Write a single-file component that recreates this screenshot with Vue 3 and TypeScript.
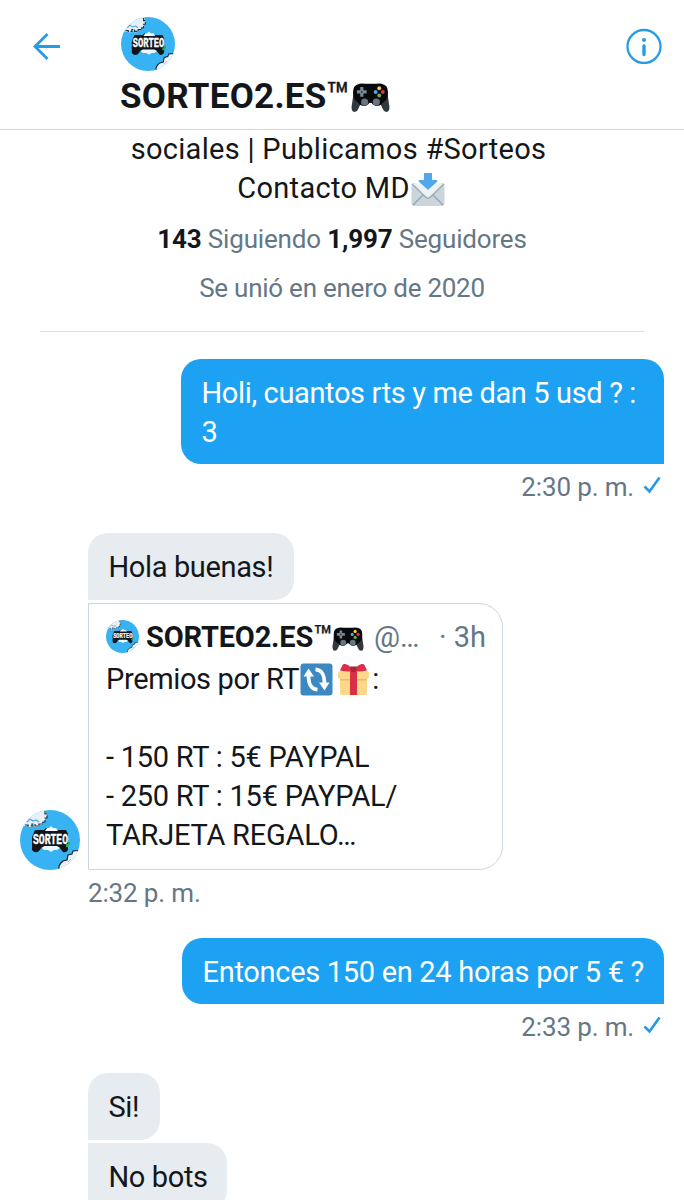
<script setup lang="ts">
interface Line {
  text: string
  cls: string
}

const question: Line[] = [
  { text: 'Holi, cuantos rts y me dan 5 usd ? :', cls: 'q1' },
  { text: '3', cls: 'q2' },
]

const prizes: Line[] = [
  { text: '- 150 RT : 5€ PAYPAL', cls: 'p1' },
  { text: '- 250 RT : 15€ PAYPAL/', cls: 'p2' },
  { text: 'TARJETA REGALO…', cls: 'p3' },
]
</script>

<template>
  <svg class="defs" width="60" height="60" aria-hidden="true">
    <symbol id="avatar" viewBox="0 0 60 60">
      <clipPath id="disc"><circle cx="30" cy="30" r="30" /></clipPath>
      <g clip-path="url(#disc)">
        <rect width="60" height="60" fill="#37b3f3" />
        <path d="M0 0H26V4H27V8H25V12H22V15H18V17H14V15H12V17H8V16H4V15H0Z" fill="#e9f0f5" />
        <path d="M25 1V4H27V8H25V12H23V14H19V16H15V14H12V16H8V15H5" fill="none" stroke="#1c3446" stroke-width="1.2" stroke-dasharray="5 1.5" />
        <path d="M7 12L10 9L13 11L16 10L19 12" fill="none" stroke="#48a9e0" stroke-width="1.2" />
        <path d="M39 60V56L41 53L43 51L47 50L48 45L52 44L53 41L60 40V60Z" fill="#edf4f8" />
        <path d="M39 59V56L41 53L43 51L47 50L48 45L52 44L53 41L58 40.500" fill="none" stroke="#12222b" stroke-width="1.2" />
        <path d="M48 52L51 49" stroke="#89c8a1" stroke-width="1" />
        <path d="M15 20H24L26 18H34L36 20H46L48 24V39Q47 43 43 42L39 37H22L19 41Q15 44 12 40V27Z" fill="#11161a" />
        <path d="M22 38L24 36H37L40 38L37 40L34 40L31 42L28 40H24Z" fill="#e9f8ff" />
        <path d="M25 21L27 18H29L31 16L33 18H36L38 21Z" fill="#f5fbff" />
        <path d="M46 34H48V32H50V35H48V37H46Z" fill="#28ae43" />
      </g>
      <text x="13" y="33.500" textLength="35" lengthAdjust="spacingAndGlyphs" class="logo-word">SORTEO</text>
    </symbol>
    <symbol id="gamepad" viewBox="0 0 38 28">
      <path d="M3 6L1 20Q-.5 27 3 28Q6 28.500 8 23L10 19H28L30 23Q32 28.500 35 28Q38.500 27 37 20L35 6Z" fill="#303940" />
      <path d="M7 1Q9-.3 14 .7H24Q29-.3 31 1Q36 2 36 9Q36 17 31 19Q28 23 23.500 22Q21 21 20 19H18Q17 21 14.500 22Q10 23 7 19Q2 17 2 9Q2 2 7 1Z" fill="#08090b" />
      <path d="M9 3.800h3.100v3.200h3.200v3.100h-3.200v3.200H9v-3.200H5.800V7H9z" fill="#788b95" />
      <circle cx="10.550" cy="8.550" r="1" fill="#33414a" />
      <circle cx="13.300" cy="18.500" r="3.500" fill="#667580" />
      <circle cx="24.700" cy="18.500" r="3.500" fill="#667580" />
      <circle cx="27.500" cy="5" r="1.900" fill="#ffca3a" />
      <circle cx="24" cy="8.600" r="1.900" fill="#49a9e9" />
      <circle cx="31" cy="8.600" r="1.900" fill="#df3349" />
      <circle cx="27.500" cy="12.100" r="1.900" fill="#72ad4c" />
    </symbol>
    <symbol id="envelope" viewBox="0 0 34 34">
      <rect x=".5" y="10" width="33" height="23" rx="3" fill="#cbd5dc" />
      <path d="M2 32L13 21M32 32L21 21" stroke="#98a9b5" stroke-width="1.500" />
      <path d="M1 11L14.500 24Q17 26.300 19.500 24L33 11" fill="#e5eaee" stroke="#98a9b5" stroke-width="1.200" />
      <path d="M3 10H31L20 21.500Q17 24 14 21.500Z" fill="#f0f3f5" />
      <path d="M13 0H21V7H26Q27 7.500 26 8.800L18 16Q17 17 16 16L8 8.800Q7 7.500 8 7H13Z" fill="#50a7e9" />
    </symbol>
    <symbol id="repeat" viewBox="0 0 33 33">
      <rect x=".5" y=".5" width="32" height="32" rx="3" fill="#3b88c3" />
      <path d="M17.500 26.700C10.500 26 8.500 21 8.500 12M15.500 6.300C22.500 7 24.500 12 24.500 21" fill="none" stroke="#fff" stroke-width="3.800" />
      <path d="M3.500 13.500L8.500 5.500L14 13.500ZM29.500 19.500L24.500 27.500L19 19.500Z" fill="#fff" />
    </symbol>
    <symbol id="gift" viewBox="0 0 33 33">
      <rect x="3" y="13" width="27" height="19" rx="2" fill="#fdd888" />
      <rect x="1" y="8" width="31" height="8" rx="2" fill="#fdd888" />
      <path d="M3 16H30V17.500H3Z" fill="#edb966" />
      <path d="M13 8H20V32H13Z" fill="#da2f47" />
      <path d="M16.500 8C12 1 7 0 5.500 2L3 7.500Q10 9 16.500 8ZM16.500 8C21 1 26 0 27.500 2L30 7.500Q23 9 16.500 8Z" fill="#da2f47" />
      <path d="M13 3.500H20L18.500 9H14.500Z" fill="#a9243b" />
    </symbol>
    <symbol id="check" viewBox="0 0 18 18">
      <path d="M1.500 10.500L6.500 15.500L16.500 1.500" fill="none" stroke="#249ce7" stroke-width="2.700" />
    </symbol>
  </svg>

  <main class="screen">
    <header class="topbar">
      <svg class="back" viewBox="0 0 28 28"><path d="M27 14.500H2M14.500 2L2 14.500L14.500 27" fill="none" stroke="#279be4" stroke-width="2.800" /></svg>
      <div class="identity">
        <svg class="avatar-top"><use href="#avatar" /></svg>
        <div class="title">
          <span class="title-name">SORTEO2.ES</span><span class="title-tm">™</span><svg class="pad-top"><use href="#gamepad" /></svg>
        </div>
      </div>
      <svg class="info" viewBox="0 0 36 36">
        <circle cx="18" cy="18.500" r="16.500" fill="none" stroke="#279be4" stroke-width="2.300" />
        <circle cx="18" cy="12" r="2" fill="#279be4" />
        <path d="M18 18V26.500" stroke="#279be4" stroke-width="3.400" stroke-linecap="round" />
      </svg>
    </header>

    <section class="profile">
      <div class="bio bio-first"><span class="b1">sociales | Publicamos #Sorteos</span></div>
      <div class="bio bio-contact"><span class="b2">Contacto MD</span><svg class="envelope"><use href="#envelope" /></svg></div>
      <div class="counts"><b>143</b> <span>Siguiendo</span> <b>1,997</b> <span>Seguidores</span></div>
      <div class="joined"><span>Se unió en enero de 2020</span></div>
    </section>

    <section class="chat">
      <div class="bubble mine first"><div v-for="line in question" :key="line.text"><span :class="line.cls">{{ line.text }}</span></div></div>
      <div class="stamp right"><span>2:30 p. m.</span><svg class="check"><use href="#check" /></svg></div>

      <div class="incoming">
        <svg class="avatar-side"><use href="#avatar" /></svg>
        <div class="stack">
          <div class="bubble theirs hola"><span>Hola buenas!</span></div>
          <article class="card">
            <div class="card-head">
              <svg class="avatar-small"><use href="#avatar" /></svg>
              <span class="card-name">SORTEO2.ES</span><span class="card-tm">™</span>
              <svg class="pad-small"><use href="#gamepad" /></svg>
              <span class="handle">@…</span><span class="age">· 3h</span>
            </div>
            <div class="card-line lead"><span class="p0">Premios por RT</span><svg class="emoji"><use href="#repeat" /></svg><svg class="emoji gift"><use href="#gift" /></svg><span class="colon">:</span></div>
            <div class="card-line blank"></div>
            <div v-for="line in prizes" :key="line.text" class="card-line"><span :class="line.cls">{{ line.text }}</span></div>
          </article>
        </div>
      </div>
      <div class="stamp left"><span>2:32 p. m.</span></div>

      <div class="bubble mine second"><span class="e1">Entonces 150 en 24 horas por 5 € ?</span></div>
      <div class="stamp right"><span>2:33 p. m.</span><svg class="check"><use href="#check" /></svg></div>

      <div class="bubble theirs si"><span>Si!</span></div>
      <div class="bubble theirs bots"><span>No bots</span></div>
    </section>
  </main>
</template>

<style>
body { margin: 0; overflow: hidden; background: #fff; }
</style>

<style scoped>
* { box-sizing: border-box; }
svg { display: block; flex: none; }
.defs { position: absolute; z-index: -1; }
.logo-word { font: 700 14.5px "Liberation Mono", monospace; fill: #fff; stroke: #fff; stroke-width: .4; }
.screen { width: 684px; height: 1200px; overflow: hidden; background: #fff; color: #14171a; font-family: Roboto, "Liberation Sans", sans-serif; font-size: 29px; line-height: 39px; white-space: nowrap; }
.topbar { display: flex; height: 130px; border-bottom: 1px solid #ccd6dd; }
.back { width: 28px; height: 28px; margin: 32px 0 0 33px; }
.identity { margin: 17px 0 0 60px; flex: 1; }
.avatar-top { width: 54px; height: 54px; }
.title { display: flex; height: 50px; font-weight: 700; line-height: 52px; font-size: 35px; margin-left: -1px; }
.title-name { width: 206px; letter-spacing: .25px; }
.title-tm { width: 25px; font-size: 39px; font-weight: 400; -webkit-text-stroke: .4px #14171a; }
.pad-top { width: 39px; height: 29px; margin-top: 12px; }
.info { width: 36px; height: 36px; margin: 28px 22px 0 0; }
.profile { height: 202px; margin: 0 40px; border-bottom: 1px solid #d9dfe3; text-align: center; }
.bio { display: flex; justify-content: center; letter-spacing: .3px; }
.bio-first { padding-right: 7px; }
.bio-contact { height: 39px; padding-right: 2px; }
.envelope { width: 34px; height: 34px; margin: 4px 0 0 1px; }
.counts { margin-top: 12px; font-size: 26px; letter-spacing: -.17px; color: #657786; }
.counts b { color: #14171a; }
.joined { margin-top: 10px; font-size: 26px; letter-spacing: -.25px; color: #657786; }
.chat { display: flex; flex-direction: column; padding: 27px 20px 0; }
.bubble { padding: 15px 20px 0 20.5px; height: 67px; letter-spacing: -.36px; }
.mine { align-self: flex-end; background: #1da1f2; color: #fff; border-radius: 20px 20px 0 20px; }
.first { width: 483px; height: 105px; }
.second { width: 482px; height: 66px; margin-top: 22px; letter-spacing: -.3px; }
.theirs { background: #e6ecf0; border-radius: 20px 20px 20px 0; }
.stamp { display: flex; height: 46px; line-height: 46px; font-size: 26px; letter-spacing: -.15px; color: #657786; }
.right { align-self: flex-end; }
.check { width: 18px; height: 18px; margin: 12px 3px 0 9px; }
.incoming { display: flex; align-items: flex-end; margin-top: 23px; }
.avatar-side { width: 60px; height: 60px; margin-right: 8px; }
.hola { width: 206px; }
.card { width: 415px; height: 267px; margin-top: 3px; padding: 14px 16px 0 17px; border: 1px solid #ccd6dd; border-radius: 0 24px 24px 0; }
.card-head { display: flex; height: 39px; line-height: 39px; }
.avatar-small { width: 33px; height: 33px; margin: 2px 7px 0 0; }
.card-name { width: 167px; font-weight: 700; font-size: 29px; letter-spacing: -.2px; }
.card-tm { width: 19px; font-weight: 400; font-size: 32px; -webkit-text-stroke: .3px #14171a; }
.pad-small { width: 32px; height: 24px; margin-top: 9px; }
.handle { width: 67px; margin-left: 10px; color: #657786; }
.age { color: #657786; }
.lead { display: flex; margin-top: 3px; }
.card-line { height: 39px; letter-spacing: -.24px; }
.p0 { letter-spacing: -.36px; }
.emoji { width: 33px; height: 33px; margin: 3px 0 0 1px; }
.gift { margin-left: 4px; }
.colon { margin-left: 2px; }
.left { margin-left: 68px; }
.si { width: 72px; margin: 23px 0 0 68px; }
.bots { width: 139px; margin: 3px 0 0 68px; border-top-left-radius: 0; }
</style>
